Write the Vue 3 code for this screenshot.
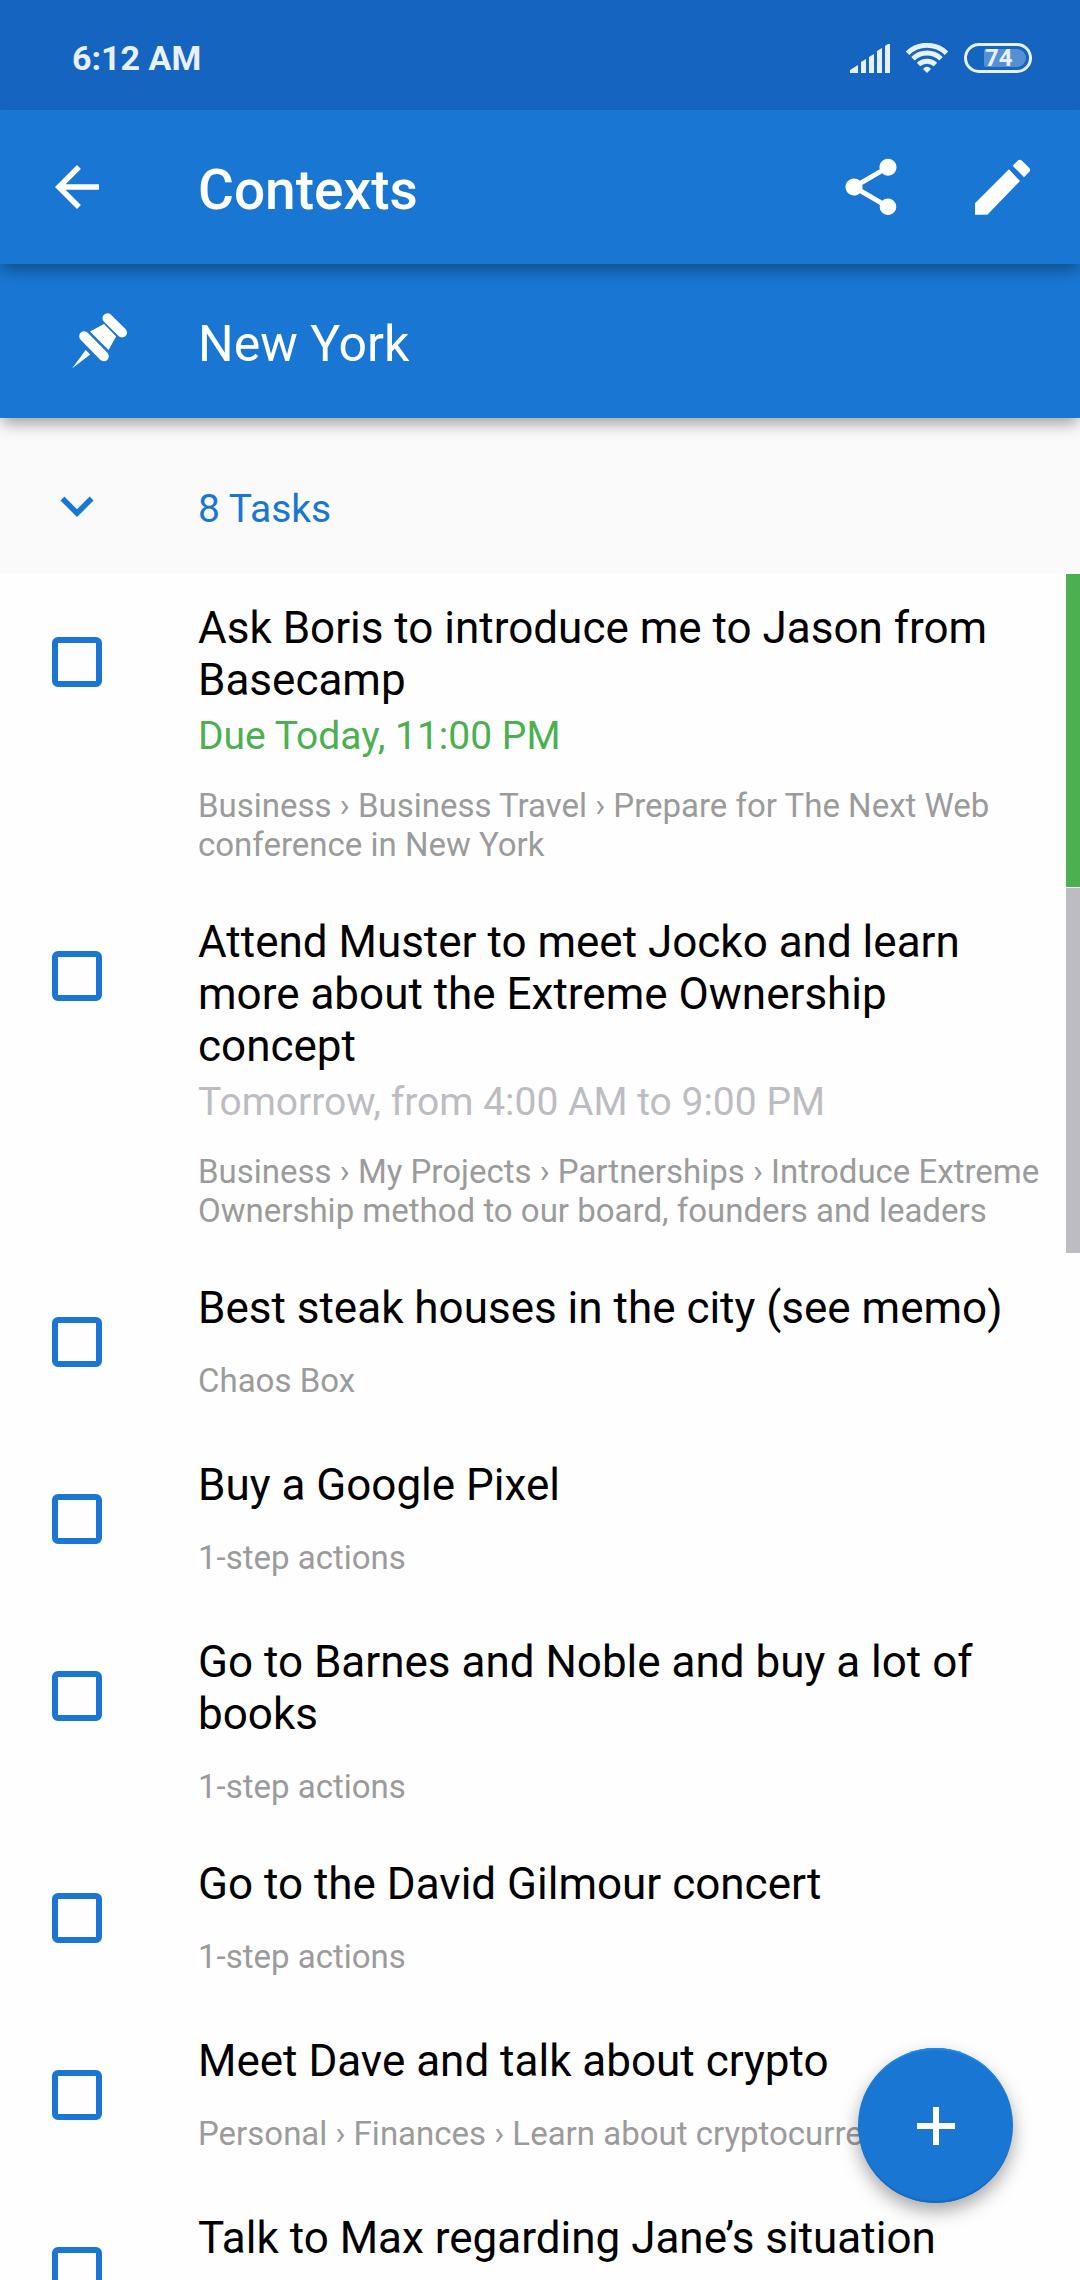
<script setup>
import { ref } from 'vue'

const tasks = ref([
  {
    title: 'Ask Boris to introduce me to Jason from Basecamp',
    due: 'Due Today, 11:00 PM',
    tone: 'today',
    path: 'Business › Business Travel › Prepare for The Next Web conference in New York',
    done: false,
  },
  {
    title: 'Attend Muster to meet Jocko and learn more about the Extreme Ownership concept',
    due: 'Tomorrow, from 4:00 AM to 9:00 PM',
    tone: 'later',
    path: 'Business › My Projects › Partnerships › Introduce Extreme Ownership method to our board, founders and leaders',
    done: false,
  },
  { title: 'Best steak houses in the city (see memo)', path: 'Chaos Box', done: false },
  { title: 'Buy a Google Pixel', path: '1-step actions', done: false },
  { title: 'Go to Barnes and Noble and buy a lot of books', path: '1-step actions', done: false },
  { title: 'Go to the David Gilmour concert', path: '1-step actions', done: false },
  {
    title: 'Meet Dave and talk about crypto',
    path: 'Personal › Finances › Learn about cryptocurrencies',
    done: false,
  },
  { title: 'Talk to Max regarding Jane’s situation', done: false },
])
</script>

<template>
  <div class="screen">
    <div class="status">
      <span class="clock">6:12 AM</span>
      <div class="indicators">
        <svg class="signal" viewBox="0 0 40 29" aria-hidden="true">
          <path d="M0 29V26L8 21V29ZM11 29V18L16 15V29ZM19 29V13L24 10V29ZM27 29V7L32 4V29ZM35 29V2L38 0H40V29Z" />
        </svg>
        <svg class="wifi" viewBox="0 0 42 30" aria-hidden="true">
          <path d="M1.500 10.200A28 28 0 0 1 40.500 10.200M7 15.800A20 20 0 0 1 35 15.800M12.500 21.500A12.500 12.500 0 0 1 29.500 21.500" />
          <path class="dot" d="M17 26Q21 21.500 25 26L21 30Z" />
        </svg>
        <div class="battery"><span class="charge">74</span></div>
      </div>
    </div>

    <header class="bar appbar">
      <button class="lead" type="button" aria-label="Back">
        <svg class="icon" viewBox="0 0 24 24"><path d="M20 11H7.830l5.590-5.590L12 4l-8 8 8 8 1.410-1.410L7.830 13H20z" /></svg>
      </button>
      <h1 class="label title">Contexts</h1>
      <div class="actions">
        <button type="button" aria-label="Share">
          <svg class="share" viewBox="0 0 24 24"><path d="M18 16.080c-.760 0-1.440.300-1.960.770L8.910 12.700c.050-.230.090-.460.090-.700s-.040-.470-.090-.700l7.050-4.110c.540.500 1.250.810 2.040.810 1.660 0 3-1.340 3-3s-1.340-3-3-3-3 1.340-3 3c0 .240.040.470.090.700L8.040 9.810C7.500 9.310 6.790 9 6 9c-1.660 0-3 1.340-3 3s1.340 3 3 3c.790 0 1.500-.310 2.040-.810l7.120 4.160c-.050.210-.080.430-.080.650 0 1.610 1.310 2.920 2.920 2.920s2.920-1.310 2.920-2.920-1.310-2.920-2.920-2.920z" /></svg>
        </button>
        <button type="button" aria-label="Edit">
          <svg class="edit" viewBox="0 0 168 168"><path d="M0 133L102 31L135 66L37 167H0ZM113 20L128 5Q134-1 141 5L163 27Q168 33 163 38L147 55Z" /></svg>
        </button>
      </div>
    </header>

    <section class="bar context">
      <span class="lead pin-cell">
        <svg class="pin" viewBox="0 0 56 56" aria-hidden="true">
          <path class="cap" d="M36.500 5.200L51 19.500" />
          <path class="cap" d="M13.200 23.200L32.800 43.300" />
          <path d="M33 11L45.200 23.500L37.500 37L19 18.500ZM14.700 37L19.200 41.500L1 55.500Z" />
        </svg>
      </span>
      <h2 class="label name">New York</h2>
    </section>

    <button class="group" type="button" aria-expanded="true">
      <span class="lead">
        <svg class="icon" viewBox="0 0 24 24" aria-hidden="true"><path d="M16.590 8.590L12 13.170 7.410 8.590 6 10l6 6 6-6z" /></svg>
      </span>
      <span class="label">8 Tasks</span>
    </button>

    <ul class="list">
      <li v-for="(task, i) in tasks" :key="i" class="task" :class="task.tone">
        <input :id="'task-' + i" v-model="task.done" class="check" type="checkbox" />
        <div class="body">
          <label class="task-title" :for="'task-' + i">{{ task.title }}</label>
          <p v-if="task.due" class="due">{{ task.due }}</p>
          <p v-if="task.path" class="path">{{ task.path }}</p>
        </div>
      </li>
    </ul>

    <button class="fab" type="button" aria-label="Add task">
      <svg viewBox="0 0 38 38"><path d="M16 0H22V16H38V22H22V38H16V22H0V16H16Z" /></svg>
    </button>
  </div>
</template>

<style>
body {
  margin: 0;
}
</style>

<style scoped>
.screen {
  --blue: #1976d2;
  --gutter: 198px;
  position: relative;
  display: flex;
  flex-direction: column;
  height: 100vh;
  overflow: hidden;
  background: #fefefe;
  color: #000;
  font-family: Roboto, 'Noto Sans', sans-serif;
}

h1,
h2,
p,
ul {
  margin: 0;
  padding: 0;
  font-weight: 400;
}

button {
  margin: 0;
  padding: 0;
  border: 0;
  background: none;
  color: inherit;
  font: inherit;
}

svg {
  display: block;
  fill: currentColor;
}

.status {
  flex: none;
  display: flex;
  align-items: center;
  justify-content: space-between;
  height: 110px;
  padding: 6px 48px 0 72px;
  box-sizing: border-box;
  background: #1565c0;
  color: #e8f0f9;
}

.clock {
  font-size: 34px;
  line-height: 40px;
  font-weight: 700;
}

.indicators {
  display: flex;
  align-items: center;
  gap: 16px;
}

.signal {
  width: 40px;
  height: 29px;
}

.wifi {
  width: 42px;
  height: 30px;
  fill: none;
  stroke: currentColor;
  stroke-width: 5;
}

.wifi .dot {
  fill: currentColor;
  stroke: none;
}

.battery {
  width: 68px;
  height: 30px;
  padding: 3px 3px 3px 17px;
  box-sizing: border-box;
  border: 3px solid currentColor;
  border-radius: 15px;
}

.charge {
  display: block;
  height: 18px;
  padding-left: 1px;
  border-radius: 2px 9px 9px 2px;
  background: #5590d2;
  font-size: 24px;
  line-height: 18px;
  font-weight: 700;
}

.bar {
  position: relative;
  flex: none;
  display: flex;
  align-items: center;
  height: 154px;
  background: var(--blue);
  color: #fff;
  box-shadow: 0 8px 14px -2px rgba(0, 0, 0, 0.35);
}

.appbar {
  z-index: 2;
}

.context {
  z-index: 1;
}

.lead {
  flex: none;
  width: var(--gutter);
  padding-left: 44px;
  box-sizing: border-box;
}

.pin-cell {
  padding-left: 71px;
}

.label {
  padding-top: 6px;
}

.icon {
  width: 66px;
  height: 66px;
}

.title {
  flex: 1;
  font-size: 55px;
  line-height: 64px;
  font-weight: 500;
}

.name {
  font-size: 50px;
  line-height: 58px;
}

.actions {
  display: flex;
  align-items: center;
  gap: 70px;
  padding-right: 49px;
}

.share {
  width: 68px;
  height: 68px;
}

.edit,
.pin {
  width: 56px;
  height: 56px;
}

.pin .cap {
  stroke: currentColor;
  stroke-width: 10;
  stroke-linecap: round;
}

.group {
  flex: none;
  display: flex;
  align-items: center;
  height: 155px;
  padding-top: 20px;
  box-sizing: border-box;
  background: #fafafa;
  color: var(--blue);
  font-size: 39px;
  line-height: 46px;
  text-align: left;
}

.list {
  flex: 1;
  min-height: 0;
  overflow: hidden auto;
  scrollbar-width: none;
  list-style: none;
}

.task {
  display: flex;
  align-items: flex-start;
  min-height: 176px;
  margin-top: 1px;
  padding: 28px 16px 23px 52px;
  box-sizing: border-box;
  border-right: 14px solid transparent;
}

.check {
  flex: none;
  appearance: none;
  width: 50px;
  height: 50px;
  margin: 35px 96px 0 0;
  border: 6px solid var(--blue);
  border-radius: 6px;
}

.check:checked {
  background: var(--blue);
}

.body {
  flex: 1;
  min-width: 0;
}

.task-title {
  display: block;
  font-size: 44px;
  line-height: 52px;
}

.due {
  margin-top: 7px;
  font-size: 39px;
  line-height: 46px;
}

.path {
  margin-top: 27px;
  color: #9b9b9b;
  font-size: 33px;
  line-height: 39px;
}

.today {
  border-right-color: #4caf50;
}

.today .due {
  color: #4caf50;
}

.later {
  border-right-color: #bcbcc2;
}

.later .due {
  color: #bcbcc2;
}

.fab {
  position: absolute;
  right: 67px;
  bottom: 77px;
  display: flex;
  align-items: center;
  justify-content: center;
  width: 155px;
  height: 155px;
  border-radius: 50%;
  background: var(--blue);
  color: #fff;
  box-shadow:
    0 8px 18px rgba(0, 0, 0, 0.35),
    inset 0 3px 1px -1px #1e88e5,
    inset 0 -3px 1px -1px #1769bb;
}

.fab svg {
  width: 38px;
  height: 38px;
}
</style>
